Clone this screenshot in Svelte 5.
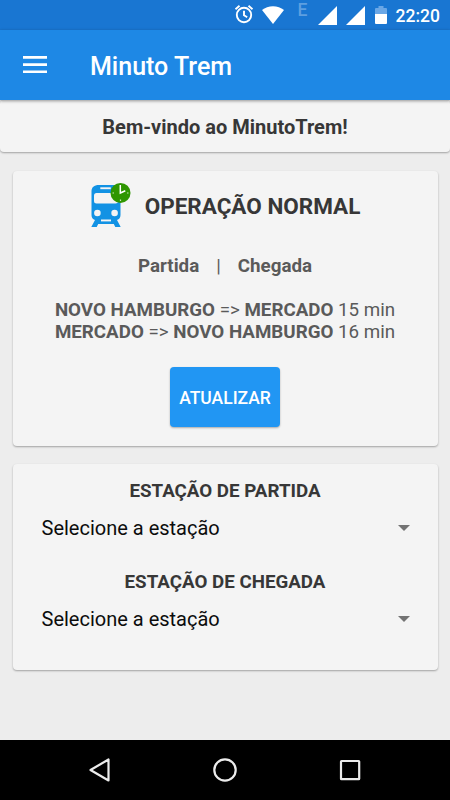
<script>
  const viagens = [
    { de: 'NOVO HAMBURGO', para: 'MERCADO', min: 15 },
    { de: 'MERCADO', para: 'NOVO HAMBURGO', min: 16 },
  ];

  const campos = ['ESTAÇÃO DE PARTIDA', 'ESTAÇÃO DE CHEGADA'];
</script>

<div class="screen">
  <div class="status">
    <svg class="alarm" width="20" height="20" viewBox="0 0 20 20" fill="none" stroke="#fff" stroke-width="1.9">
      <circle cx="10" cy="11" r="7.2" />
      <path d="M10 6.700v4.600l3.200 2M1.500 5.200l4-3.400M18.500 5.200l-4-3.400" />
    </svg>
    <svg class="wifi" width="22" height="18" viewBox="0 0 22 18">
      <path d="M11 18 0 4.100C3 1.600 6.900.3 11 .3s8 1.300 11 3.800z" fill="#fff" />
    </svg>
    <span class="edge">E</span>
    <svg class="signal" width="19" height="19" viewBox="0 0 19 19"><path d="M19 0v19H0z" fill="#fff" /></svg>
    <svg class="signal" width="19" height="19" viewBox="0 0 19 19"><path d="M19 0v19H0z" fill="#fff" /></svg>
    <svg class="battery" width="12" height="18" viewBox="0 0 12 18">
      <path d="M3.500 0h5v2H11a1 1 0 0 1 1 1v5H0V3a1 1 0 0 1 1-1h2.500z" fill="#6aa7e6" />
      <path d="M0 8h12v9a1 1 0 0 1-1 1H1a1 1 0 0 1-1-1z" fill="#fff" />
    </svg>
    <span class="time">22:20</span>
  </div>

  <header>
    <svg width="24" height="18" viewBox="0 0 24 18" fill="#fff">
      <path d="M0 0h24v2.700H0zM0 7.200h24v2.700H0zM0 14.400h24v2.700H0z" />
    </svg>
    <h1>Minuto Trem</h1>
  </header>

  <main>
    <div class="card welcome">Bem-vindo ao MinutoTrem!</div>

    <div class="card operation">
      <div class="state">
        <svg width="42" height="46" viewBox="0 0 42 46">
          <path
            d="M9 4h14c5 0 7.500 2.300 7.500 6.500V34c0 2.600-1.200 4.400-3.500 5l3.700 7h-5.400l-1.500-3H8.200l-1.500 3H1.300L5 39c-2.300-.6-3.500-2.400-3.500-5V10.500C1.500 6.300 4 4 9 4z"
            fill="#1292e4"
          />
          <path d="M10.300 6.300h10.500v1.900H10.300z" fill="#f4f4f4" />
          <rect x="4" y="12" width="24" height="10.500" rx="2.500" fill="#f4f4f4" />
          <circle cx="7.400" cy="32" r="3.300" fill="#f4f4f4" />
          <circle cx="24.600" cy="32" r="3.300" fill="#f4f4f4" />
          <path d="M11 38.500h10v1.900H11z" fill="#f4f4f4" />
          <circle cx="30.500" cy="11.900" r="10" fill="#2f9600" />
          <path d="M30.300 4v8l5-2.200" fill="none" stroke="#fff" stroke-width="1.500" />
          <path d="M22.500 12h1.500M37 12h1.500M30.500 18.500v1.500" stroke="#c8e6b8" stroke-width="1.200" />
        </svg>
        <span>OPERAÇÃO NORMAL</span>
      </div>

      <div class="legend">
        <b>Partida</b>
        <span>|</span>
        <b>Chegada</b>
      </div>

      <div class="trips">
        {#each viagens as v}
          <div><b>{v.de}</b> =&gt; <b>{v.para}</b> {v.min} min</div>
        {/each}
      </div>

      <button>ATUALIZAR</button>
    </div>

    <div class="card stations">
      {#each campos as campo}
        <div class="field">
          <h2>{campo}</h2>
          <div class="spinner">
            <span>Selecione a estação</span>
            <svg width="12" height="6" viewBox="0 0 12 6"><path d="M0 0h12L6 6z" fill="#737373" /></svg>
          </div>
        </div>
      {/each}
    </div>
  </main>

  <nav>
    <svg width="24" height="26" viewBox="0 0 24 26"><path d="M20.500 2.500v21L2.500 13z" /></svg>
    <svg width="24" height="26" viewBox="0 0 24 26"><circle cx="12" cy="13" r="10.700" /></svg>
    <svg width="24" height="26" viewBox="0 0 24 26"><rect x="3" y="4" width="18.200" height="18.200" rx="0.500" /></svg>
  </nav>
</div>

<style>
  :global(body) {
    margin: 0;
  }

  .screen {
    display: flex;
    flex-direction: column;
    height: 800px;
    background: #ededed;
    font-family: Roboto, sans-serif;
    overflow: hidden;
  }

  svg {
    display: block;
    flex: none;
  }

  .status {
    display: flex;
    align-items: flex-start;
    justify-content: flex-end;
    height: 30px;
    padding-right: 10px;
    box-sizing: border-box;
    background: #1976d2;
    color: #fff;
  }

  .alarm {
    margin-top: 4px;
  }

  .wifi {
    margin: 6px 14px 0 8px;
  }

  .edge {
    width: 12px;
    margin: 1px 8px 0 0;
    color: #5e9fe0;
    font-size: 17.5px;
    font-weight: 500;
    line-height: 18px;
  }

  .signal {
    margin: 6px 9px 0 0;
  }

  .battery {
    margin: 6px 9px 0 1px;
  }

  .time {
    padding-top: 6px;
    font-size: 17.5px;
    font-weight: 500;
    line-height: 20px;
  }

  header {
    display: flex;
    align-items: center;
    gap: 43px;
    height: 70px;
    padding: 0 23px;
    background: #1e88e5;
    color: #fff;
    box-shadow: 0 1px 3px rgba(0, 0, 0, 0.4);
    z-index: 1;
  }

  h1 {
    margin: 3px 0 0;
    font-size: 25px;
    font-weight: 500;
    line-height: 30px;
  }

  main {
    flex: 1;
  }

  .card {
    box-sizing: border-box;
    border-radius: 4px;
    background: #f4f4f4;
    box-shadow: 0 1px 2px rgba(0, 0, 0, 0.32);
    text-align: center;
  }

  .welcome {
    height: 52px;
    color: #373737;
    font-size: 20px;
    font-weight: 700;
    line-height: 54px;
  }

  .operation {
    display: flex;
    flex-direction: column;
    align-items: center;
    height: 275px;
    margin: 19px 12.5px 18px;
    padding-top: 10px;
    color: #5a5a5a;
    font-size: 18.75px;
    line-height: 22px;
  }

  .state {
    display: flex;
    align-items: center;
    gap: 13px;
    height: 46px;
    color: #373737;
    font-size: 22.5px;
    font-weight: 700;
  }

  .state span {
    padding-top: 4px;
  }

  .legend {
    display: flex;
    gap: 17px;
    margin-top: 28px;
  }

  .trips {
    margin-top: 22px;
  }

  button {
    width: 110px;
    height: 60px;
    margin-top: 24px;
    padding: 2px 0 0;
    border: 0;
    border-radius: 4px;
    background: #2196f3;
    box-shadow: 0 1px 2px rgba(0, 0, 0, 0.3);
    color: #fff;
    font-family: inherit;
    font-size: 17.5px;
    font-weight: 500;
  }

  .stations {
    height: 206px;
    margin: 0 12.5px;
    padding-top: 16px;
  }

  .field {
    height: 90.5px;
  }

  h2 {
    margin: 0;
    color: #373737;
    font-size: 18.75px;
    font-weight: 700;
    line-height: 22px;
  }

  .spinner {
    display: flex;
    align-items: center;
    justify-content: space-between;
    height: 24px;
    margin-top: 14px;
    padding: 0 28px 0 29px;
    color: #0c0c0c;
    font-size: 20px;
    line-height: 24px;
  }

  nav {
    display: flex;
    align-items: center;
    justify-content: center;
    gap: 101px;
    height: 60px;
    background: #000;
  }

  nav svg {
    fill: none;
    stroke: #ececec;
    stroke-width: 2.2;
    stroke-linejoin: round;
  }
</style>
